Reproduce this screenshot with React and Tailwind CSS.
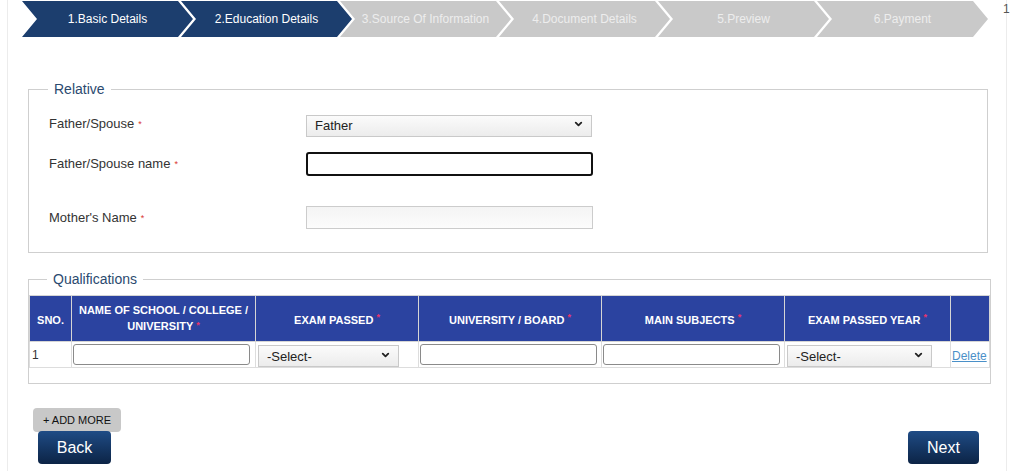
import { ChevronDown } from "lucide-react";

const steps = [
  { label: "1.Basic Details", active: true },
  { label: "2.Education Details", active: true },
  { label: "3.Source Of Information", active: false },
  { label: "4.Document Details", active: false },
  { label: "5.Preview", active: false },
  { label: "6.Payment", active: false },
];

const Star = () => <span className="ml-[4px] text-[9px] text-[#d9362f] relative -top-[1px]">*</span>;

const HeadStar = ({ top = "-top-[4px]" }) => (
  <span className={`relative ${top} ml-[3px] text-[9px] text-[#e8336d]`}>*</span>
);

const Select = ({ value, className }) => (
  <div className={`relative ${className}`}>
    <select
      defaultValue={value}
      className="w-full h-full appearance-none border border-[#c9c9c9] bg-gradient-to-b from-[#fbfbfb] to-[#ececec] pl-[8px] text-[13px] text-[#222] outline-none"
    >
      <option>{value}</option>
    </select>
    <ChevronDown
      className="absolute right-[8px] top-1/2 -translate-y-1/2 w-[11px] h-[11px] text-[#222] pointer-events-none"
      strokeWidth={4}
    />
  </div>
);

const App = () => {
  return (
    <div className="relative w-[1021px] h-[471px] overflow-hidden bg-white font-['Liberation_Sans',Arial,sans-serif]">
      <div className="ml-[7px] w-[1000px] h-[471px] border-x border-[#ececec]">
        {/* Stepper */}
        <div className="flex ml-[14px] pt-[1px] h-[37px]">
          {steps.map((s, i) => (
            <div
              key={i}
              className={`flex items-center justify-center w-[171px] h-[36px] shrink-0 text-[12px] ${
                i > 0 ? "-ml-[12px]" : ""
              } ${s.active ? "bg-[#1c3e6e] text-white" : "bg-[#c9c9c9] text-[#ededed]"} [clip-path:polygon(0_0,calc(100%_-_15px)_0,100%_50%,calc(100%_-_15px)_100%,0_100%,15px_50%)]`}
            >
              {s.label}
            </div>
          ))}
        </div>

        {/* Relative */}
        <fieldset className="ml-[20px] mt-[44px] w-[960px] border border-[#cfcfcf] pl-[20px] pb-[23px]">
          <legend className="ml-[-1px] px-[6px] text-[14px] leading-[16px] text-[#2b4a6f]">Relative</legend>
          <div className="flex items-center mt-[16px] h-[22px]">
            <label className="w-[257px] text-[13px] text-[#333]">
              Father/Spouse<Star />
            </label>
            <Select value="Father" className="w-[286px] h-[22px]" />
          </div>
          <div className="flex items-center mt-[17px] h-[24px]">
            <label className="w-[257px] text-[13px] text-[#333]">
              Father/Spouse name<Star />
            </label>
            <input className="w-[287px] h-[24px] border-2 border-[#111] rounded-[3px] outline-none" />
          </div>
          <div className="flex items-center mt-[30px] h-[23px]">
            <label className="w-[257px] text-[13px] text-[#333]">
              Mother's Name<Star />
            </label>
            <input className="w-[287px] h-[23px] border border-[#cccccc] bg-gradient-to-b from-[#f4f4f4] to-[#fcfcfc] outline-none" />
          </div>
        </fieldset>

        {/* Qualifications */}
        <fieldset className="ml-[20px] mt-[18px] w-[962px] border border-[#cfcfcf] pb-[15px]">
          <legend className="ml-[18px] px-[6px] text-[14px] leading-[16px] text-[#2b4a6f]">Qualifications</legend>
          <table className="mt-[8px] w-[960px] table-fixed border-collapse">
            <colgroup>
              <col className="w-[42px]" />
              <col className="w-[184px]" />
              <col className="w-[163px]" />
              <col className="w-[183px]" />
              <col className="w-[183px]" />
              <col className="w-[166px]" />
              <col className="w-[39px]" />
            </colgroup>
            <thead>
              <tr className="h-[46px] bg-[#2b43a0] text-white text-[11px] font-bold">
                <th className="border border-[#d5d5d5] pt-[3px]">SNO.</th>
                <th className="border border-[#d5d5d5] leading-[16px] px-[4px]">
                  NAME OF SCHOOL / COLLEGE / UNIVERSITY<HeadStar top="-top-[2px]" />
                </th>
                <th className="border border-[#d5d5d5] pt-[3px]">EXAM PASSED<HeadStar /></th>
                <th className="border border-[#d5d5d5] pt-[3px]">UNIVERSITY / BOARD<HeadStar /></th>
                <th className="border border-[#d5d5d5] pt-[3px]">MAIN SUBJECTS<HeadStar /></th>
                <th className="border border-[#d5d5d5] pt-[3px]">EXAM PASSED YEAR<HeadStar /></th>
                <th className="border border-[#d5d5d5]"></th>
              </tr>
            </thead>
            <tbody>
              <tr className="h-[26px]">
                <td className="border border-[#dddddd] pl-[2px] text-[12px] text-[#333]">1</td>
                <td className="border border-[#dddddd] pl-[1px]">
                  <input className="w-[177px] h-[21px] border border-[#8a8a8a] rounded-[3px] outline-none" />
                </td>
                <td className="border border-[#dddddd] pl-[2px]">
                  <Select value="-Select-" className="w-[141px] h-[22px]" />
                </td>
                <td className="border border-[#dddddd] pl-[1px]">
                  <input className="w-[177px] h-[21px] border border-[#8a8a8a] rounded-[3px] outline-none" />
                </td>
                <td className="border border-[#dddddd] pl-[1px]">
                  <input className="w-[177px] h-[21px] border border-[#8a8a8a] rounded-[3px] outline-none" />
                </td>
                <td className="border border-[#dddddd] pl-[2px]">
                  <Select value="-Select-" className="w-[145px] h-[22px]" />
                </td>
                <td className="border border-[#dddddd] pl-[1px]">
                  <a href="#" className="text-[12px] text-[#4a90c8] underline">Delete</a>
                </td>
              </tr>
            </tbody>
          </table>
        </fieldset>

        {/* Buttons */}
        <div className="ml-[25px] mt-[23px] w-[946px]">
          <button className="w-[88px] h-[24px] rounded-[4px] bg-[#c8c8c8] text-[11px] text-[#111]">
            + ADD MORE
          </button>
          <div className="flex justify-between -mt-[1px] pl-[5px]">
            <button className="w-[73px] h-[33px] rounded-[4px] bg-gradient-to-b from-[#1f4c86] to-[#0c2446] text-[16px] text-white">
              Back
            </button>
            <button className="w-[71px] h-[33px] rounded-[4px] bg-gradient-to-b from-[#1f4c86] to-[#0c2446] text-[16px] text-white">
              Next
            </button>
          </div>
        </div>
      </div>
      <span className="absolute left-[1003px] top-[0px] text-[12px] text-[#555]">1</span>
    </div>
  );
};

export default App;
